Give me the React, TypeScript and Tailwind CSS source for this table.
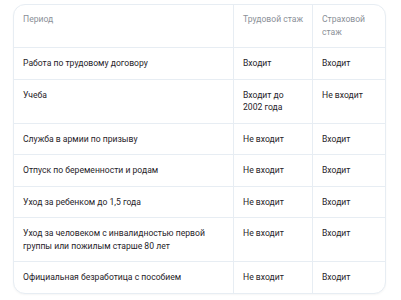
import React from "react";

const rows: [string, string, string][] = [
  ["Работа по трудовому договору", "Входит", "Входит"],
  ["Учеба", "Входит до 2002 года", "Не входит"],
  ["Служба в армии по призыву", "Не входит", "Входит"],
  ["Отпуск по беременности и родам", "Не входит", "Входит"],
  ["Уход за ребенком до 1,5 года", "Не входит", "Входит"],
  ["Уход за человеком с инвалидностью первой группы или пожилым старше 80 лет", "Не входит", "Входит"],
  ["Официальная безработица с пособием", "Не входит", "Входит"],
];

export default function App() {
  return (
    <div className="w-[401px] h-[300px] bg-white pt-[4px] pl-[13px]" style={{ fontFamily: "Roboto, 'Liberation Sans', sans-serif" }}>
      <div className="w-[373px] rounded-[12px] border border-[#e7edf3] bg-white overflow-hidden shadow-[0_1px_2px_rgba(0,0,0,0.04)] text-[8.6px] leading-[12.5px]">
        <div className="grid grid-cols-[219px_79px_73px] border-b border-[#e7edf3] text-[#8b9098]">
          <div className="px-[9px] pt-[8px] pb-[9px]">Период</div>
          <div className="pl-[9px] pr-[2px] pt-[8px] pb-[9px] border-l border-[#e7edf3] whitespace-nowrap">Трудовой стаж</div>
          <div className="px-[9px] pt-[8px] pb-[9px] border-l border-[#e7edf3]">Страховой стаж</div>
        </div>
        {rows.map((r, i) => (
          <div
            key={i}
            className={`grid grid-cols-[219px_79px_73px] text-[#1f2329] ${i < rows.length - 1 ? "border-b border-[#e7edf3]" : ""}`}
          >
            <div className="px-[9px] pt-[9px] pb-[9px] pr-[12px]">{r[0]}</div>
            <div className="px-[9px] pt-[9px] pb-[9px] border-l border-[#e7edf3]">{r[1]}</div>
            <div className="px-[9px] pt-[9px] pb-[9px] border-l border-[#e7edf3]">{r[2]}</div>
          </div>
        ))}
      </div>
    </div>
  );
}
